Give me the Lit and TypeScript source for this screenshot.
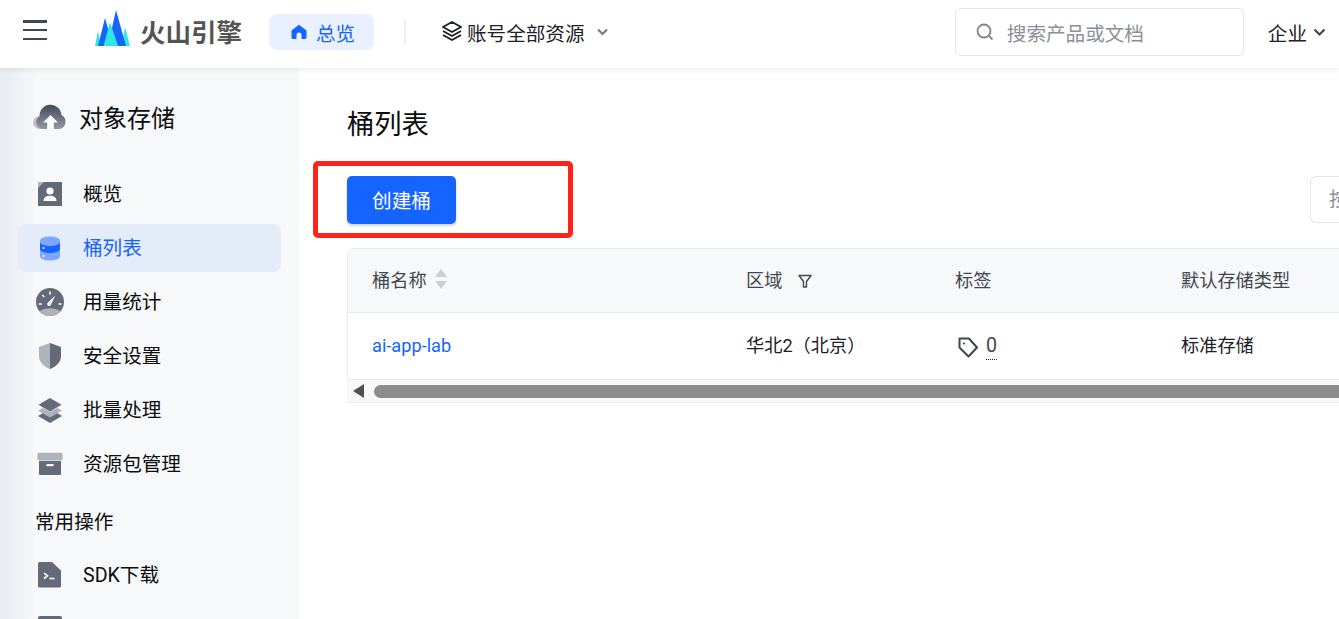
import { LitElement, html, css, svg } from "lit";
import { customElement } from "lit/decorators.js";

const G = "#646a78";
const L = "#adb2bb";

const icons: Record<string, any> = {
  overview: svg`<path d="M1 1h24v24H1z" fill="${G}"/><path d="M1 1h6l-6 6z" fill="${L}"/><circle cx="13" cy="10" r="3.6" fill="#fff"/><path d="M6.500 20c0-3.600 3-5.200 6.500-5.200s6.500 1.600 6.500 5.200z" fill="#fff"/>`,
  bucket: svg`<path d="M3 5.500c0-2.200 4.500-4 10-4s10 1.800 10 4v16c0 2.200-4.500 4-10 4s-10-1.800-10-4z" fill="#7fa6ff"/><path d="M3 7c0 2.200 4.500 4 10 4s10-1.800 10-4v7c0 2.200-4.500 4-10 4S3 16.200 3 14z" fill="#1664ff"/><circle cx="6.500" cy="13" r="1" fill="#fff"/><circle cx="6.500" cy="21" r="1" fill="#fff"/>`,
  stats: svg`<circle cx="13" cy="13" r="14" fill="${G}"/><path d="M2.500 22.300C5.500 20.300 9 19.300 13 19.300s7.500 1 10.500 3A14 14 0 0 1 13 27 14 14 0 0 1 2.500 22.300z" fill="${L}"/><path d="M10.300 14.300l8-7.800-4.800 10a2 2 0 0 1-3.200-2.200z" fill="#fff"/><path d="M13 2.500v3M5.300 6l2 2M1.800 15h3M21.500 15h3" stroke="#fff" stroke-width="1.600" fill="none"/>`,
  shield: svg`<path d="M13 0l11 4v9c0 6-4.500 10.500-11 13z" fill="${G}"/><path d="M13 0L2 4v9c0 6 4.500 10.500 11 13z" fill="${L}"/>`,
  layers: svg`<path d="M13 26L1 19l5-3 7 4 7-4 5 3z" fill="${G}"/><path d="M13 20.500L1 13.500 6 11l7 4 7-4 5 2.500z" fill="${L}"/><path d="M13 1l11.500 6.800L13 14.600 1.500 7.800z" fill="${G}"/>`,
  box: svg`<rect x="0.500" y="1.700" width="25" height="7.300" rx="1" fill="${L}"/><path d="M2 9.700h22V23a1 1 0 0 1-1 1H3a1 1 0 0 1-1-1z" fill="${G}"/><rect x="9.500" y="13" width="7" height="2.200" fill="#fff"/>`,
  sdk: svg`<path d="M2.500 0H15l9 8.500V24a1.500 1.500 0 0 1-1.500 1.500h-20A1.500 1.500 0 0 1 1 24V1.500A1.500 1.500 0 0 1 2.500 0z" fill="${G}"/><path d="M7 11l3.500 2.800L7 16.500" stroke="#fff" stroke-width="1.600" fill="none"/><path d="M12.500 16.500h5" stroke="#fff" stroke-width="1.600"/>`,
  doc: svg`<rect x="1" y="0" width="24" height="26" rx="2" fill="${G}"/>`,
};

const navIcon = (k: string) => html`<svg class="nav-ic" viewBox="0 0 26 26">${icons[k]}</svg>`;

@customElement("app-root")
export class AppRoot extends LitElement {
  static styles = css`
    :host { display: block; width: 100vw; height: 100vh; min-width: 1339px; overflow: hidden; position: relative; background: #fff;
      font-family: Roboto, "Noto Sans CJK SC", sans-serif; color: #0c0d0e; }
    * { box-sizing: border-box; }
    .top { height: 68px; display: flex; align-items: center; background: #fff; box-shadow: 0 2px 6px rgba(0,0,0,.07); position: relative; z-index: 2; }
    .burger { margin-left: 23px; width: 24px; height: 20px; margin-top: -8px; display: flex; flex-direction: column; justify-content: space-between; }
    .burger i { display: block; height: 2.500px; background: #41464f; }
    .logo { margin-left: 48px; margin-top: -12px; width: 35px; height: 36px; display: block; }
    .brand { margin-left: 10px; font-size: 25.500px; font-weight: 700; color: #545454; margin-top: -2px; line-height: 30px; width: 105px; white-space: nowrap; }
    .pill { margin-left: 24px; margin-top: -4px; width: 105px; height: 36px; border-radius: 8px; background: #e9f0ff; color: #1664ff; font-size: 19.600px; display: flex; align-items: center; padding-left: 22px; gap: 9px; }
    .pill svg { width: 16px; height: 16px; }
    .divider { margin-left: 30px; margin-top: -4px; width: 2px; height: 24px; background: #eceef2; }
    .scope { margin-left: 35px; margin-top: -4px; display: flex; align-items: center; font-size: 19.600px; color: #1d2129; }
    .scope svg.st { width: 22px; height: 22px; margin-right: 4px; margin-top: -3px; }
    .scope svg.ch { width: 13px; height: 10px; margin-left: 11px; }
    .search { margin-left: auto; margin-top: -4px; width: 289px; height: 48px; border: 1px solid #e3e6ee; border-radius: 6px; display: flex; align-items: center; padding-left: 20px; gap: 13px; color: #8a8f99; font-size: 19.600px; }
    .search svg { width: 18px; height: 18px; }
    .org { margin-left: 24px; margin-right: 13px; margin-top: -4px; display: flex; align-items: center; font-size: 19.600px; gap: 6px; color: #1d2129; }
    .org svg { width: 13px; height: 10px; }
    .body { display: flex; height: 551px; }
    .side { width: 299px; flex: none; padding: 26px 17px 0; background: linear-gradient(90deg, #e8ebef 0, #f6f8fa 36px); overflow: hidden; }
    .side-title { height: 48px; display: flex; align-items: center; margin-bottom: 28px; padding-left: 17px; font-size: 24px; gap: 13px; color: #0c0d0e; }
    .side-title svg { width: 33px; height: 28px; flex: none; overflow: visible; }
    .side-title span { margin-bottom: 4px; margin-left: -1px; }
    .nav { height: 48px; width: 264px; margin-bottom: 6px; border-radius: 8px; display: flex; align-items: center; padding-left: 20px; gap: 20px; font-size: 19.600px; color: #0c0d0e; flex: none; }
    .nav span { margin-bottom: 3px; }
    .nav.on { background: #e4ebf9; color: #1664ff; }
    .nav-ic { width: 26px; height: 26px; flex: none; overflow: visible; }
    .sec { font-size: 19.600px; height: 28px; line-height: 28px; padding-left: 18px; margin: 21px 0 14px; }
    .main { flex: 1; min-width: 0; padding: 0 0 0 48px; position: relative; overflow: hidden; }
    h1 { margin: 36px 0 0; font-size: 27.300px; font-weight: 400; line-height: 42px; height: 42px; color: #0c0d0e; }
    .tools { display: flex; justify-content: space-between; margin-top: 30px; height: 48px; }
    .btn { width: 109px; height: 48px; border: 0; border-radius: 5px; background: #1664ff; color: #fff; font: inherit; font-size: 19.600px; box-shadow: 0 2px 3px rgba(0,0,0,.18); padding: 0 0 2px; }
    .box { width: 200px; height: 47px; margin-right: -171px; flex: none; border: 1px solid #e3e6ee; border-radius: 6px 0 0 6px; border-right: 0; color: #8a8f99; font-size: 19.600px; padding-left: 18px; line-height: 45px; white-space: nowrap; }
    .table { margin-top: 24px; width: 1200px; border: 1px solid #e8ebf0; border-right: 0; border-bottom: 0; border-radius: 6px 0 0 0; font-size: 18.200px; }
    .row { display: grid; grid-template-columns: 374px 209px 226px 1fr; padding-left: 24px; align-items: center; padding-bottom: 4px; }
    .head { height: 64px; background: #f6f8fa; color: #42464e; border-bottom: 1px solid #e8ebf0; }
    .cells { height: 66px; color: #1d2129; }
    .cell { display: flex; align-items: center; white-space: nowrap; }
    .sort { width: 12px; height: 22px; margin-left: 8px; }
    .filt { width: 14px; height: 14px; margin-left: 16px; margin-top: 4px; }
    a { color: #1664ff; text-decoration: none; margin-top: 2px; }
    .tag { width: 24px; height: 24px; margin-left: 1px; margin-right: 6px; margin-top: 5px; flex: none; }
    .num { border-bottom: 1px dotted #1d2129; line-height: 22px; padding-bottom: 2px; margin-top: 6px; color: #42464e; font-size: 19.600px; }
    .sb { height: 24px; width: 1200px; background: #f8f8f8; border-top: 1px solid #e8ebf0; border-bottom: 1px solid #ececec; display: flex; align-items: center; padding-left: 6px; }
    .sb svg { width: 11px; height: 14px; flex: none; }
    .thumb { margin-left: 10px; margin-top: 1px; flex: 1; height: 13px; border-radius: 7px 0 0 7px; background: #8c8c8c; }
    .mark { position: absolute; left: 313px; top: 161px; width: 260px; height: 77px; border: 5px solid #ff2418; border-radius: 5px; z-index: 3; }
  `;

  render() {
    return html`
      <div class="top">
        <div class="burger"><i></i><i></i><i></i></div>
        <svg class="logo" viewBox="0 0 35 36">
          <path d="M0 36L3 21l3 15z" fill="#2fe6e6"/>
          <path d="M27 36l3-19 5 19z" fill="#2fe6e6"/>
          <path d="M3 36l7-28 8 28z" fill="#1664ff"/>
          <path d="M13 36L21 0l10 36z" fill="#1664ff"/>
          <path d="M8.500 36L15 12l8 24z" fill="#2fe6e6"/>
        </svg>
        <div class="brand">火山引擎</div>
        <div class="pill">
          <svg viewBox="0 0 16 16"><path d="M8 .8L15.500 6.500v7a1.500 1.500 0 0 1-1.500 1.500h-3.500V11a2.500 2.500 0 0 0-5 0v4H2A1.500 1.500 0 0 1 .5 13.500v-7z" fill="#1664ff"/></svg>
          总览
        </div>
        <div class="divider"></div>
        <div class="scope">
          <svg class="st" viewBox="0 0 22 22" fill="none" stroke="#1d2129" stroke-width="2" stroke-linejoin="round"><path d="M11 2l9 5-9 5-9-5z"/><path d="M2 11l9 5 9-5M2 15l9 5 9-5"/></svg>
          账号全部资源
          <svg class="ch" viewBox="0 0 13 10" fill="none" stroke="#737a87" stroke-width="2.200"><path d="M2 2.500l4.500 4.500L11 2.500"/></svg>
        </div>
        <div class="search">
          <svg viewBox="0 0 18 18" fill="none" stroke="#80838a" stroke-width="1.800"><circle cx="8" cy="8" r="6.500"/><path d="M13 13l3.500 3.500"/></svg>
          搜索产品或文档
        </div>
        <div class="org">企业
          <svg viewBox="0 0 13 10" fill="none" stroke="#41464f" stroke-width="2.200"><path d="M1.500 2.500L6.500 7.500l5-5"/></svg>
        </div>
      </div>
      <div class="body">
        <div class="side">
          <div class="side-title">
            <svg viewBox="0 0 33 28">
              <defs><linearGradient id="cl" x1="0" y1="0" x2="0" y2="1"><stop offset="0" stop-color="#434959"/><stop offset="1" stop-color="#9298a5"/></linearGradient></defs>
              <path d="M5.500 25a6.500 6.500 0 0 1 0-13h5v13z" fill="#bcc0c9"/>
              <path d="M9.500 25a6.800 6.800 0 0 1-4-12.500A11 11 0 0 1 27.500 11 7.500 7.500 0 0 1 25.500 25z" fill="url(#cl)"/>
              <path d="M16.500 11l7.500 7.500h-4.200V25h-6.600v-6.500H9z" fill="#fff"/>
            </svg>
            <span>对象存储</span>
          </div>
          <div class="nav">${navIcon("overview")}<span>概览</span></div>
          <div class="nav on">${navIcon("bucket")}<span>桶列表</span></div>
          <div class="nav">${navIcon("stats")}<span>用量统计</span></div>
          <div class="nav">${navIcon("shield")}<span>安全设置</span></div>
          <div class="nav">${navIcon("layers")}<span>批量处理</span></div>
          <div class="nav">${navIcon("box")}<span>资源包管理</span></div>
          <div class="sec">常用操作</div>
          <div class="nav">${navIcon("sdk")}<span>SDK下载</span></div>
          <div class="nav">${navIcon("doc")}</div>
        </div>
        <div class="main">
          <h1>桶列表</h1>
          <div class="tools">
            <button class="btn">创建桶</button>
            <div class="box">按</div>
          </div>
          <div class="table">
            <div class="row head">
              <div class="cell">桶名称
                <svg class="sort" viewBox="0 0 12 22"><path d="M6 1l6 8H0z" fill="#c9ced9"/><path d="M6 21l6-8H0z" fill="#c9ced9"/></svg>
              </div>
              <div class="cell">区域
                <svg class="filt" viewBox="0 0 14 14" fill="none" stroke="#42464e" stroke-width="1.400" stroke-linejoin="round"><path d="M1 1.500h12L8.500 7.500v5.500h-3V7.500z"/></svg>
              </div>
              <div class="cell">标签</div>
              <div class="cell">默认存储类型</div>
            </div>
            <div class="row cells">
              <div class="cell"><a href="#">ai-app-lab</a></div>
              <div class="cell">华北2（北京）</div>
              <div class="cell">
                <svg class="tag" viewBox="0 0 24 24" fill="none" stroke="#42464e" stroke-width="2" stroke-linejoin="round"><path d="M3.500 3.500h9.500l8 9-8.500 9L3.500 12.500z"/><circle cx="8" cy="8.500" r="1.100" fill="#42464e" stroke="none"/></svg>
                <span class="num">0</span>
              </div>
              <div class="cell">标准存储</div>
            </div>
          </div>
          <div class="sb">
            <svg viewBox="0 0 11 14"><path d="M11 0v14L0 7z" fill="#505050"/></svg>
            <div class="thumb"></div>
          </div>
        </div>
      </div>
      <div class="mark"></div>
    `;
  }
}
